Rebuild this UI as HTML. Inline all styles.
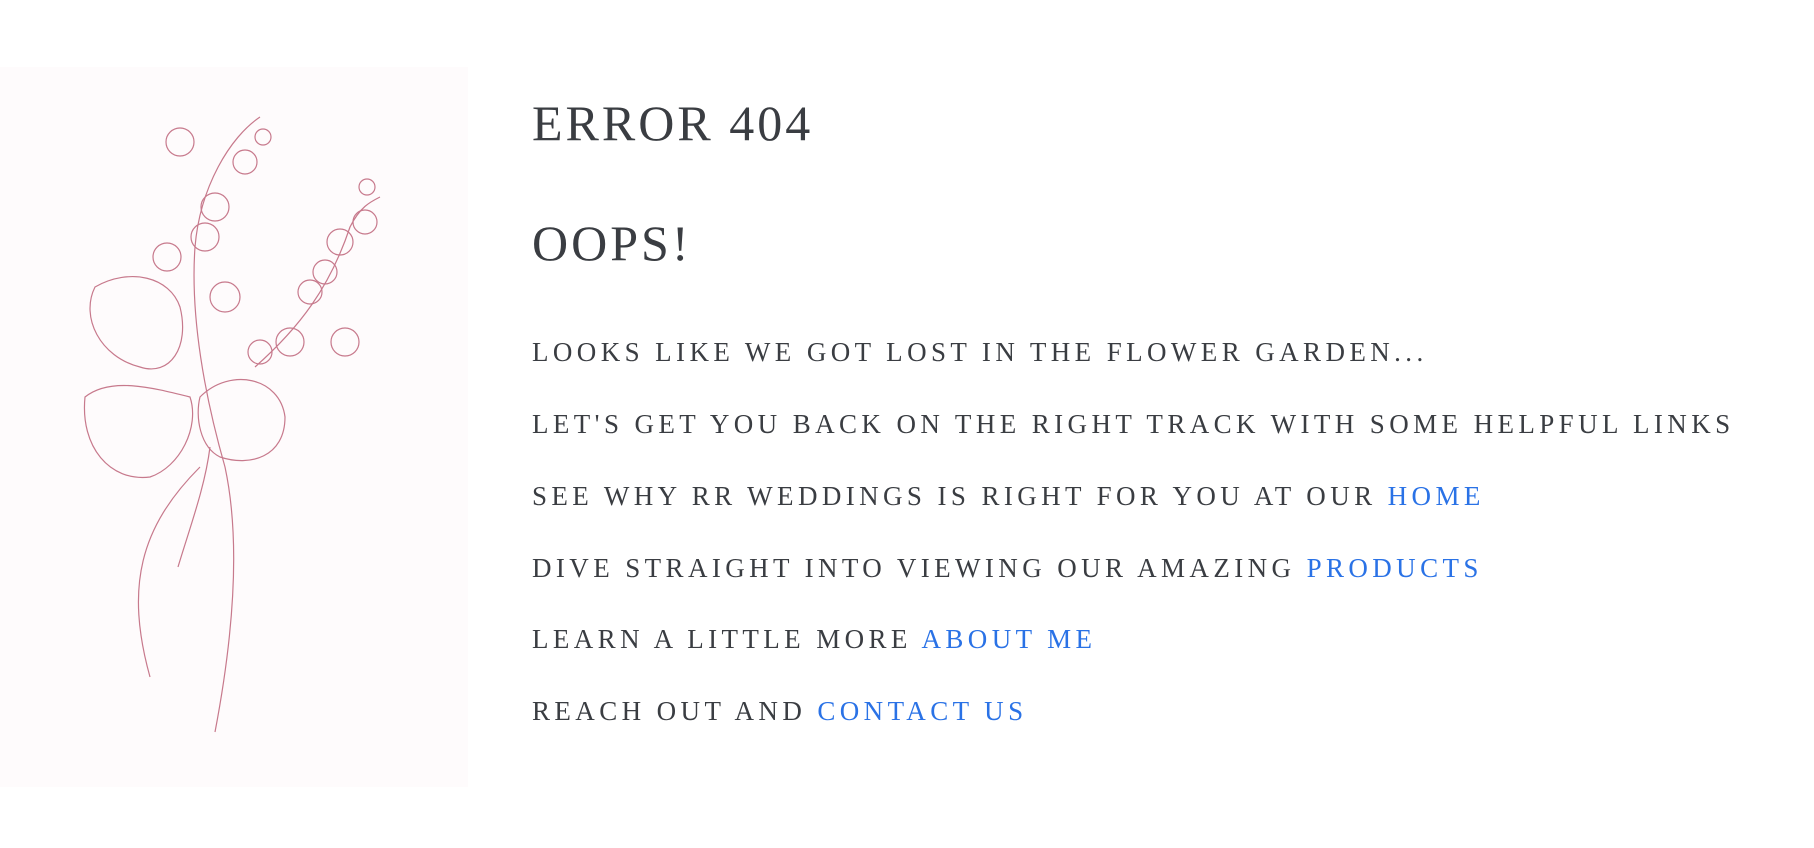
<!DOCTYPE html>
<html><head><meta charset="utf-8"><style>
html,body{margin:0;padding:0;background:#fff;width:1814px;height:848px;overflow:hidden}
.panel{position:absolute;left:0;top:67px;width:468px;height:720px;background:#fefbfc}
.t{position:absolute;left:532px;font-family:"Liberation Serif",serif;color:#3a3d42;white-space:nowrap}
h1{margin:0;font-weight:normal;font-size:50px;letter-spacing:3px;color:#45484d}
.l{font-size:27px;letter-spacing:4.4px}
a{color:#2a72e6;text-decoration:none}
</style></head><body>
<div class="panel">
<svg width="468" height="720" viewBox="0 0 468 720" fill="none" stroke="#c7798c" stroke-width="1.2">
<path d="M215 665 C235 560 240 470 225 400 C205 330 190 250 195 180 C200 120 230 70 260 50"/>
<path d="M150 610 C125 520 140 460 200 400"/>
<path d="M178 500 C190 460 205 420 210 380"/>
<path d="M255 300 C300 260 330 220 350 160 C360 140 370 135 380 130"/>
<circle cx="180" cy="75" r="14"/><circle cx="245" cy="95" r="12"/><circle cx="263" cy="70" r="8"/>
<circle cx="215" cy="140" r="14"/><circle cx="205" cy="170" r="14"/><circle cx="167" cy="190" r="14"/>
<circle cx="225" cy="230" r="15"/><circle cx="340" cy="175" r="13"/><circle cx="365" cy="155" r="12"/>
<circle cx="325" cy="205" r="12"/><circle cx="310" cy="225" r="12"/><circle cx="290" cy="275" r="14"/>
<circle cx="345" cy="275" r="14"/><circle cx="260" cy="285" r="12"/><circle cx="367" cy="120" r="8"/>
<path d="M95 220 C130 200 170 210 180 240 C190 280 170 310 140 300 C100 290 80 250 95 220Z"/>
<path d="M85 330 C110 310 150 320 190 330 C200 360 180 400 150 410 C110 415 80 380 85 330Z"/>
<path d="M200 330 C230 300 280 310 285 350 C285 390 250 400 220 390 C200 380 195 350 200 330Z"/>
</svg>
</div>
<h1 class="t" style="top:94px">ERROR 404</h1>
<h1 class="t" style="top:214px">OOPS!</h1>
<div class="t l" style="top:337px">LOOKS LIKE WE GOT LOST IN THE FLOWER GARDEN...</div>
<div class="t l" style="top:409px">LET'S GET YOU BACK ON THE RIGHT TRACK WITH SOME HELPFUL LINKS</div>
<div class="t l" style="top:481px">SEE WHY RR WEDDINGS IS RIGHT FOR YOU AT OUR <a>HOME</a></div>
<div class="t l" style="top:553px">DIVE STRAIGHT INTO VIEWING OUR AMAZING <a>PRODUCTS</a></div>
<div class="t l" style="top:624px">LEARN A LITTLE MORE <a>ABOUT ME</a></div>
<div class="t l" style="top:696px">REACH OUT AND <a>CONTACT US</a></div>
</body></html>
